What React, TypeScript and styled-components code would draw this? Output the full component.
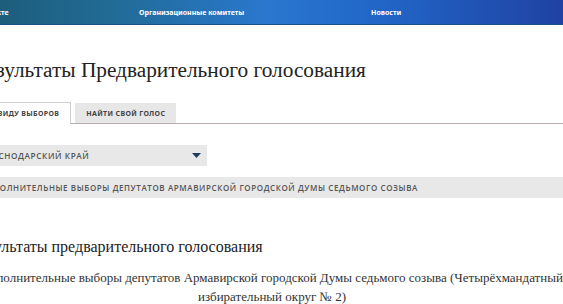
import React from 'react'
import styled, { createGlobalStyle } from 'styled-components'

const GlobalStyle = createGlobalStyle`
  html, body {
    margin: 0;
    padding: 0;
    background: #ffffff;
    overflow: hidden;
  }
`

const Page = styled.div`
  width: 563px;
  height: 304px;
  overflow: hidden;
  background: #fff;
`

const TopBar = styled.nav`
  height: 24px;
  background: linear-gradient(90deg, #1d5a75 0%, #216c98 25%, #2a77cf 50%, #2165c6 70%, #1f42a3 100%);
  border-bottom: 1px solid #1d4f86;
  display: flex;
  align-items: center;
  margin-left: -28px;
  .nav_item {
    font-family: 'Noto Sans', sans-serif;
    font-weight: 700;
    font-size: 7px;
    color: #fff;
    white-space: nowrap;
  }
`

const NavItem = styled.span<{ $width: number }>`
  width: ${({ $width }) => $width}px;
  flex: none;
`

const Content = styled.main`
  width: 600px;
  margin-left: -28px;
  padding-top: 30px;
`

const Title = styled.h1`
  margin: 0;
  padding-left: 3px;
  font-family: 'Liberation Serif', serif;
  font-weight: 400;
  font-size: 21.3px;
  line-height: 30px;
  color: #222;
  white-space: nowrap;
`

const Tabs = styled.div`
  margin-top: 17px;
  display: flex;
  align-items: flex-end;
  gap: 4px;
  border-bottom: 1px solid #b7acaa;
`

const Tab = styled.div<{ $active?: boolean }>`
  height: ${({ $active }) => ($active ? 22 : 20)}px;
  padding: 0 11px;
  display: flex;
  align-items: center;
  box-sizing: border-box;
  font-family: 'Noto Sans', sans-serif;
  font-weight: 700;
  font-size: 7px;
  letter-spacing: 0.35px;
  color: #444;
  white-space: nowrap;
  background: ${({ $active }) => ($active ? '#fff' : '#e7e7e7')};
  border: ${({ $active }) => ($active ? '1px solid #cfcfcf' : 'none')};
  border-bottom: none;
  margin-bottom: ${({ $active }) => ($active ? '-1px' : '0')};
`

const Select = styled.div`
  margin-top: 21px;
  width: 235px;
  height: 21px;
  box-sizing: border-box;
  padding: 0 6px 0 9px;
  background: #e8e8e8;
  display: flex;
  align-items: center;
  justify-content: space-between;
  font-family: 'Open Sans', sans-serif;
  font-weight: 600;
  font-size: 8.2px;
  letter-spacing: 0.6px;
  color: #555;
  svg {
    display: block;
  }
`

const ElectionBar = styled.div`
  margin-top: 11px;
  height: 21px;
  padding: 0 8px;
  background: #e8e8e8;
  display: flex;
  align-items: center;
  font-family: 'Open Sans', sans-serif;
  font-weight: 600;
  font-size: 8px;
  letter-spacing: 0.6px;
  color: #555;
  white-space: nowrap;
`

const SubTitle = styled.h2`
  margin: 39px 0 0;
  font-family: 'Liberation Serif', serif;
  font-weight: 400;
  font-size: 16px;
  line-height: 20px;
  color: #222;
  white-space: nowrap;
`

const Description = styled.p`
  margin: 11px -14px 0;
  text-align: center;
  font-family: 'Liberation Serif', serif;
  font-size: 13px;
  line-height: 19px;
  color: #333;
`

function App() {
  return (
    <Page>
      <GlobalStyle />
      <TopBar>
        <NavItem className="nav_item" $width={167}>О проекте</NavItem>
        <NavItem className="nav_item" $width={232}>Организационные комитеты</NavItem>
        <NavItem className="nav_item" $width={100}>Новости</NavItem>
      </TopBar>
      <Content>
        <Title>Результаты Предварительного голосования</Title>
        <Tabs>
          <Tab $active>ПО ВИДУ ВЫБОРОВ</Tab>
          <Tab>НАЙТИ СВОЙ ГОЛОС</Tab>
        </Tabs>
        <Select>
          КРАСНОДАРСКИЙ КРАЙ
          <svg width="9" height="5" viewBox="0 0 9 5">
            <path d="M0 0 L9 0 L4.5 5 Z" fill="#1d3b63" />
          </svg>
        </Select>
        <ElectionBar>
          ДОПОЛНИТЕЛЬНЫЕ ВЫБОРЫ ДЕПУТАТОВ АРМАВИРСКОЙ ГОРОДСКОЙ ДУМЫ СЕДЬМОГО СОЗЫВА
        </ElectionBar>
        <SubTitle>Результаты предварительного голосования</SubTitle>
        <Description>
          Дополнительные выборы депутатов Армавирской городской Думы седьмого созыва (Четырёхмандатный избирательный округ № 2)
        </Description>
      </Content>
    </Page>
  )
}

export default App
